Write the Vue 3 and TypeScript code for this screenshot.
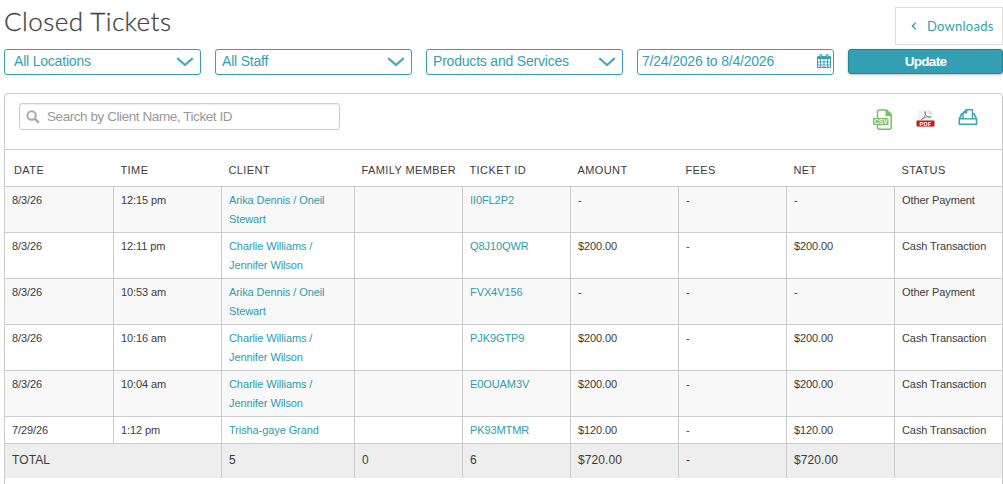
<script setup lang="ts">
interface Ticket {
  date: string
  time: string
  client: string[]
  id: string
  amount: string
  status: string
}

const filters: string[] = ['All Locations', 'All Staff', 'Products and Services']

const headings: string[] = [
  'DATE', 'TIME', 'CLIENT', 'FAMILY MEMBER', 'TICKET ID', 'AMOUNT', 'FEES', 'NET', 'STATUS',
]

const arika = ['Arika Dennis / Oneil', 'Stewart']
const charlie = ['Charlie Williams /', 'Jennifer Wilson']

const tickets: Ticket[] = [
  { date: '8/3/26', time: '12:15 pm', client: arika, id: 'II0FL2P2', amount: '-', status: 'Other Payment' },
  { date: '8/3/26', time: '12:11 pm', client: charlie, id: 'Q8J10QWR', amount: '$200.00', status: 'Cash Transaction' },
  { date: '8/3/26', time: '10:53 am', client: arika, id: 'FVX4V156', amount: '-', status: 'Other Payment' },
  { date: '8/3/26', time: '10:16 am', client: charlie, id: 'PJK9GTP9', amount: '$200.00', status: 'Cash Transaction' },
  { date: '8/3/26', time: '10:04 am', client: charlie, id: 'E0OUAM3V', amount: '$200.00', status: 'Cash Transaction' },
  { date: '7/29/26', time: '1:12 pm', client: ['Trisha-gaye Grand'], id: 'PK93MTMR', amount: '$120.00', status: 'Cash Transaction' },
]
</script>

<template>
  <main class="page">
    <header class="top">
      <h1>Closed Tickets</h1>
      <button class="downloads" type="button">
        <svg width="6" height="8" viewBox="0 0 6 8"><path d="M4.600 .7 1.400 4l3.200 3.300" fill="none" stroke="#349fb3" stroke-width="1.400" /></svg>
        <span>Downloads</span>
      </button>
    </header>

    <div class="filters">
      <div v-for="(f, i) in filters" :key="f" class="field" :class="{ first: i === 0 }">
        <span>{{ f }}</span>
        <svg class="chevron" width="18" height="10" viewBox="0 0 18 10"><path d="M1.200 1.200 9 8l7.800-6.800" fill="none" stroke="#48aabb" stroke-width="2.200" /></svg>
      </div>
      <div class="field date">
        <span>7/24/2026 to 8/4/2026</span>
        <svg class="calendar" width="14" height="15" viewBox="0 0 14 15">
          <path d="M.5 3h13v10.500H.5z" fill="#fff" stroke="#349fb3" />
          <path d="M.5 2h13v3H.5z" fill="#349fb3" />
          <path d="M3.500 5v9M7 5v9M10.500 5v9M1 8h12M1 11h12" fill="none" stroke="#349fb3" stroke-width=".9" />
          <path d="M3 .5h1.500v3H3zM9.500.5H11v3H9.500z" fill="#d7eef2" stroke="#349fb3" stroke-width=".9" />
        </svg>
      </div>
      <button class="update" type="button">Update</button>
    </div>

    <section class="panel">
      <div class="tools">
        <div class="search">
          <svg width="14" height="14" viewBox="0 0 14 14"><circle cx="5.600" cy="5.500" r="4.200" fill="none" stroke="#aaa" stroke-width="2" /><path d="m8.700 8.600 3.500 3.500" stroke="#aaa" stroke-width="2.400" stroke-linecap="round" /></svg>
          <span>Search by Client Name, Ticket ID</span>
        </div>
        <div class="exports">
          <svg width="20" height="22" viewBox="0 0 20 22">
            <path d="M4.500 9V3Q4.500 1 6.500 1H13.500l4.700 4.700V18.300Q18.200 20.300 16.200 20.300H6.500Q4.500 20.300 4.500 18.300V15" fill="#fff" stroke="#72c267" stroke-width="1.500" />
            <path d="M12.500 1v6h6V5.500L14 1z" fill="#72c267" />
            <rect x="0" y="9" width="15.500" height="7" rx="1" fill="#72c267" />
            <text x="7.800" y="14.900" text-anchor="middle" class="csv">CSV</text>
          </svg>
          <svg width="19" height="20" viewBox="0 0 19 20">
            <path d="M2 1h11l4 4v13H2z" fill="#f3f3f3" />
            <path d="M13 1v4h4z" fill="#d5d5d5" />
            <path d="M5 11c3-1.500 5-5.500 4.700-8-.1-1-1.200-.7-1 .3.500 2.700 2.600 5.400 5.800 5.200.7-.1.400-.9-.5-.9C11 7.500 7.500 8.700 5 11z" fill="none" stroke="#8d8d8d" stroke-width=".9" />
            <path d="M2 17h15v1.500H2z" fill="#dedede" />
            <rect x=".5" y="11.500" width="18" height="6" rx=".5" fill="#cc1717" />
            <text x="9.500" y="16.500" text-anchor="middle" class="pdf">PDF</text>
          </svg>
          <svg width="20" height="17" viewBox="0 0 20 17">
            <path d="M5 4.800H3.800L1.300 9.800v5.400h17.200V9.800L16 4.800h-1.500" fill="none" stroke="#3da6b9" stroke-width="1.600" />
            <path d="M5 9.700V4L8.300.8h6.200V9.700" fill="#fff" stroke="#3da6b9" stroke-width="1.500" />
            <path d="M5 4.500V4L8.300.8h1v3.700z" fill="#3da6b9" />
            <path d="M1 9.800h17.500" stroke="#3da6b9" stroke-width="1.500" />
          </svg>
        </div>
      </div>

      <div class="row head">
        <div v-for="h in headings" :key="h">{{ h }}</div>
      </div>
      <div v-for="t in tickets" :key="t.id" class="row ticket">
        <div>{{ t.date }}</div>
        <div>{{ t.time }}</div>
        <div class="link"><span v-for="line in t.client" :key="line">{{ line }}</span></div>
        <div></div>
        <div class="link">{{ t.id }}</div>
        <div>{{ t.amount }}</div>
        <div>-</div>
        <div>{{ t.amount }}</div>
        <div>{{ t.status }}</div>
      </div>
      <div class="row total">
        <div class="label">TOTAL</div>
        <div>5</div>
        <div>0</div>
        <div>6</div>
        <div>$720.00</div>
        <div>-</div>
        <div>$720.00</div>
        <div></div>
      </div>
    </section>
  </main>
</template>

<style>
html,
body {
  margin: 0;
  background: #fff;
  overflow: hidden;
}
</style>

<style scoped>
.page {
  box-sizing: border-box;
  width: 1003px;
  height: 484px;
  padding-left: 4px;
  overflow: hidden;
  font-family: "Liberation Sans", Arial, sans-serif;
  color: #3c3c3c;
}
.page * {
  box-sizing: border-box;
}
.page svg {
  display: block;
  flex: none;
}
.top {
  display: flex;
  justify-content: space-between;
  height: 49px;
}
h1 {
  margin: 6px 0 0;
  font: 300 26px/30px Lato, sans-serif;
  letter-spacing: 0.45px;
  color: #444;
  -webkit-text-stroke: 0.3px #444;
}
.downloads {
  display: flex;
  align-items: center;
  gap: 10px;
  width: 108px;
  height: 38px;
  margin-top: 7px;
  padding: 0 0 0 15px;
  border: 1px solid #ddd;
  background: #fff;
  font: 400 13px/18px Lato, sans-serif;
  letter-spacing: 0.25px;
  color: #349fb3;
}
.filters {
  display: flex;
  gap: 14px;
}
.field {
  display: flex;
  justify-content: space-between;
  width: 197px;
  height: 26px;
  padding: 0 6px 0 6px;
  border: 1px solid #349fb3;
  border-radius: 3px;
  font-size: 14px;
  line-height: 23px;
  letter-spacing: -0.2px;
  color: #349fb3;
  white-space: nowrap;
}
.field.first {
  padding-left: 9px;
}
.field.date {
  padding: 0 2px 0 4px;
}
.chevron {
  margin-top: 7px;
}
.calendar {
  margin-top: 4px;
}
.update {
  width: 155px;
  height: 25px;
  padding: 0;
  border: 1px solid #27828f;
  border-radius: 3px;
  background: #349fb3;
  box-shadow: 0 1px 3px rgba(0, 0, 0, 0.25);
  font: 700 13.5px/21px "Liberation Sans", Arial, sans-serif;
  letter-spacing: -0.7px;
  color: #fff;
}
.panel {
  width: 999px;
  height: 400px;
  margin-top: 18px;
  border: 1px solid #ccc;
  border-radius: 4px 4px 0 0;
}
.tools {
  display: flex;
  justify-content: space-between;
  height: 56px;
  padding: 9px 24px 0 14px;
  border-bottom: 1px solid #ccc;
}
.search {
  display: flex;
  gap: 7px;
  width: 321px;
  height: 27px;
  padding: 0 6px;
  border: 1px solid #ccc;
  border-radius: 3px;
  box-shadow: inset 0 1px 1px rgba(0, 0, 0, 0.07);
  font-size: 13.5px;
  line-height: 25px;
  letter-spacing: -0.43px;
  color: #999;
}
.search svg {
  margin-top: 6px;
}
.exports {
  display: flex;
  gap: 23px;
  padding-top: 6px;
}
.csv {
  font: 700 6.5px "Liberation Sans", sans-serif;
  fill: #fff;
}
.pdf {
  font: 700 5.5px "Liberation Sans", sans-serif;
  letter-spacing: 0.3px;
  fill: #fff;
}
.row {
  display: grid;
  grid-template-columns: 109px 108px 133px 108px 108px 108px 108px 108px 107px;
  border-bottom: 1px solid #ccc;
}
.row > div {
  padding-left: 7px;
  border-right: 1px solid #ccc;
  white-space: nowrap;
}
.row > div:last-child {
  border-right: 0;
}
.head {
  height: 37px;
  font-size: 11px;
  line-height: 41px;
  letter-spacing: 0.4px;
}
.row.head > div {
  padding-left: 6.5px;
  border-right: 0;
}
.row.head > div:first-child {
  padding-left: 9px;
}
.ticket {
  font-size: 11px;
  line-height: 19px;
  letter-spacing: -0.09px;
}
.ticket > div {
  padding-top: 4px;
  padding-bottom: 3px;
}
.ticket:nth-child(odd) {
  background: #f8f8f8;
}
.ticket span {
  display: block;
}
.link {
  color: #2b9cb1;
}
.total {
  height: 34px;
  border-bottom: 0;
  background: #eee;
  font-size: 12px;
  line-height: 32px;
  letter-spacing: 0.1px;
}
.label {
  grid-column: span 2;
}
</style>
